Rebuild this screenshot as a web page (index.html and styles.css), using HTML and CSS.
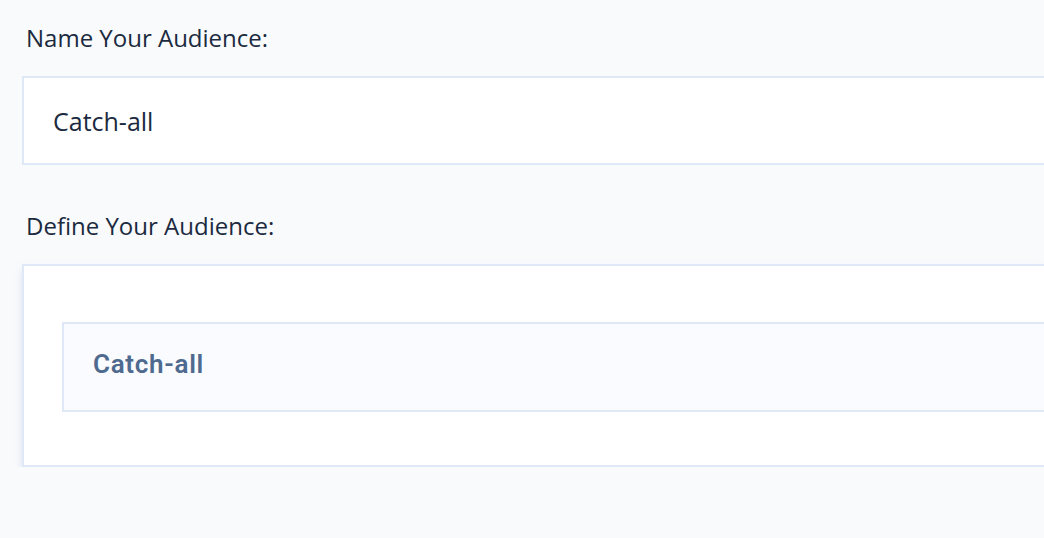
FILE: index.html
```html
<!DOCTYPE html>
<html>
<head>
<meta charset="utf-8">
<link rel="stylesheet" href="styles.css">
</head>
<body>
<div class="page">
  <div class="field">
    <label class="label">Name Your Audience:</label>
    <div class="input">Catch-all</div>
  </div>
  <div class="field field-define">
    <label class="label">Define Your Audience:</label>
    <div class="panel">
      <div class="segment">Catch-all</div>
    </div>
  </div>
</div>
</body>
</html>
```
FILE: styles.css
```css
html, body {
  margin: 0;
  padding: 0;
  background: #f9fafc;
  overflow: hidden;
}
.page {
  padding: 24px 0 0 22px;
  font-family: "Open Sans", "Noto Sans", sans-serif;
  color: #1b2a40;
}
.field {
  display: flex;
  flex-direction: column;
}
.label {
  font-size: 24px;
  line-height: 28px;
  margin-left: 4px;
  margin-bottom: 24px;
}
.input {
  height: 85px;
  border: 2px solid #dfe8f6;
  border-right: none;
  background: #fff;
  font-size: 25px;
  display: flex;
  align-items: center;
  padding-left: 29px;
}
.field-define {
  margin-top: 47px;
}
.panel {
  border: 2px solid #dfe8f6;
  border-right: none;
  background: #fff;
  padding: 56px 0 53px 38px;
  box-shadow: 0 5px 8px rgba(180, 195, 220, 0.4);
}
.segment {
  height: 80px;
  padding: 0 0 6px 29px;
  border: 2px solid #dfe8f6;
  border-right: none;
  background: #fafbfe;
  display: flex;
  align-items: center;
  font-family: Roboto, "Noto Sans", sans-serif;
  font-weight: 600;
  font-size: 26px;
  line-height: 1;
  letter-spacing: 0.7px;
  color: #4f6a8f;
}
```
